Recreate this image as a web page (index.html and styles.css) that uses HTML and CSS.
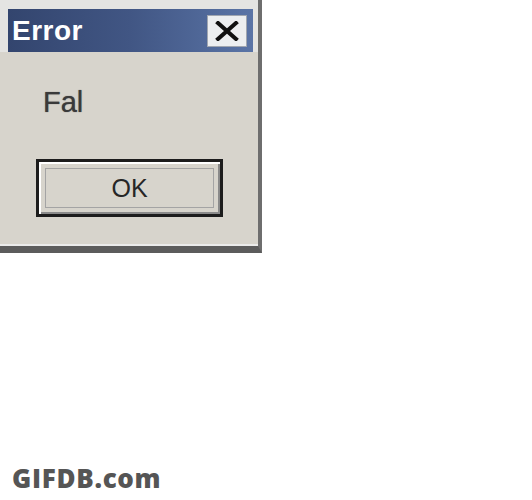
FILE: index.html
```html
<!DOCTYPE html>
<html>
<head>
<meta charset="utf-8">
<link rel="stylesheet" href="styles.css">
</head>
<body>
<div class="page">
  <div class="window">
    <div class="frame-top">
      <div class="titlebar">
        <span class="title">Error</span>
        <span class="close">
          <svg width="26" height="20" viewBox="0 0 26 20"><path d="M4 2 L22 18 M22 2 L4 18" stroke="#111" stroke-width="4" stroke-linecap="square"/></svg>
        </span>
      </div>
    </div>
    <div class="body">
      <div class="message">Fal</div>
      <div class="btn"><div class="focus">OK</div></div>
    </div>
  </div>
  <div class="spacer"></div>
  <div class="watermark">GIFDB.com</div>
</div>
</body>
</html>
```
FILE: styles.css
```css
html, body {
  margin: 0;
  padding: 0;
  background: #ffffff;
}
.page {
  width: 532px;
  height: 500px;
  display: flex;
  flex-direction: column;
  font-family: "Liberation Sans", Arial, sans-serif;
}
.window {
  width: 258px;
  border-right: 4px solid #6e6e6e;
  border-bottom: 7px solid #5c5c5c;
  background: #d7d4cc;
}
.frame-top {
  background: #e4e4e2;
  padding: 9px 5px 0 8px;
}
.titlebar {
  height: 43px;
  background: linear-gradient(90deg, #33456e 0%, #415684 50%, #5a74a6 100%);
  display: flex;
  align-items: center;
  justify-content: space-between;
  padding: 0 6px 0 4px;
}
.title {
  color: #ffffff;
  font-weight: bold;
  font-size: 28px;
  line-height: 28px;
  letter-spacing: 0.5px;
}
.close {
  width: 38px;
  height: 30px;
  background: #eceef0;
  border: 1px solid #a0a6b0;
  display: flex;
  align-items: center;
  justify-content: center;
}
.body {
  height: 194px;
  border-bottom: 2px solid #ebebea;
  padding-top: 36px;
  box-sizing: border-box;
}
.message {
  margin-left: 43px;
  font-size: 29px;
  line-height: 28px;
  color: #3a3a3a;
  text-shadow: 0 0 1px #555;
}
.btn {
  margin: 43px 0 0 36px;
  width: 187px;
  height: 58px;
  box-sizing: border-box;
  border: 3px solid #1c1c1c;
  box-shadow: inset 2px 2px 0 #ffffff, inset -2px -2px 0 #8a8a8a;
  padding: 6px;
}
.focus {
  height: 100%;
  box-sizing: border-box;
  border: 1px solid #a4a4a4;
  display: flex;
  align-items: center;
  justify-content: center;
  font-size: 25px;
  color: #262626;
}
.spacer {
  flex: 1;
}
.watermark {
  margin: 0 0 8px 12px;
  font-family: "Open Sans", "DejaVu Sans", sans-serif;
  font-weight: 800;
  font-size: 26px;
  line-height: 28px;
  color: #555555;
  letter-spacing: 0.7px;
}
```
